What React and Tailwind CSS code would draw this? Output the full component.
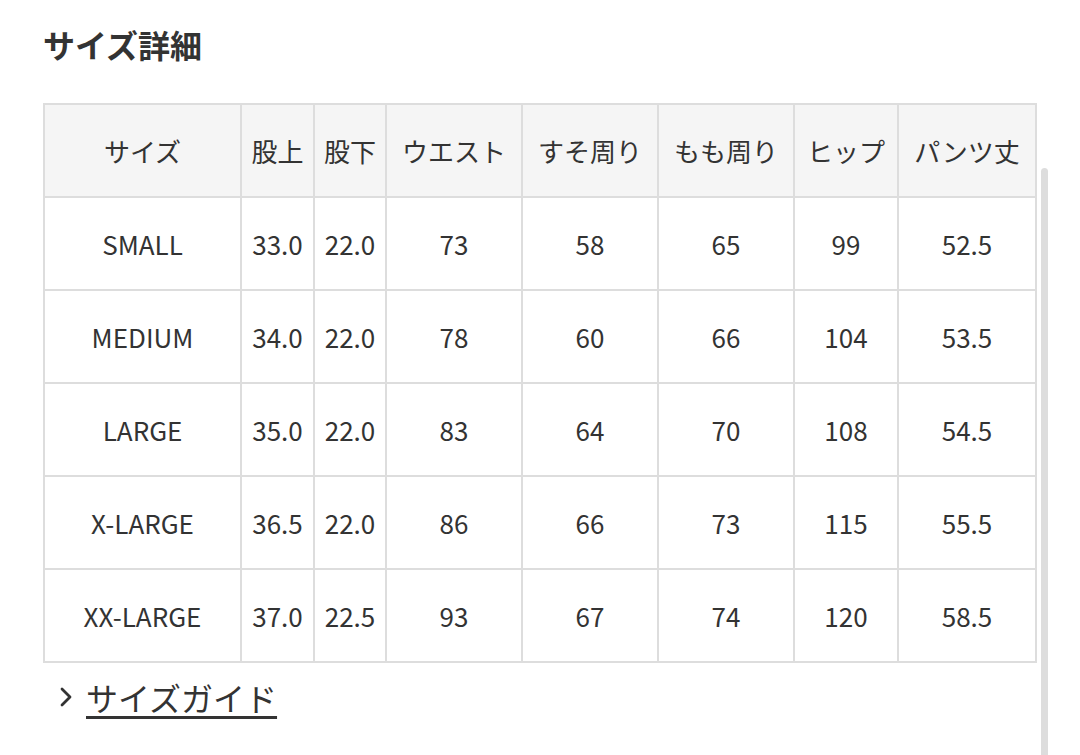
import React from 'react';

const COLS = [197, 73, 72, 136, 136, 136, 104, 138];
const HEAD = ['サイズ', '股上', '股下', 'ウエスト', 'すそ周り', 'もも周り', 'ヒップ', 'パンツ丈'];
const ROWS = [
  ['SMALL', '33.0', '22.0', '73', '58', '65', '99', '52.5'],
  ['MEDIUM', '34.0', '22.0', '78', '60', '66', '104', '53.5'],
  ['LARGE', '35.0', '22.0', '83', '64', '70', '108', '54.5'],
  ['X-LARGE', '36.5', '22.0', '86', '66', '73', '115', '55.5'],
  ['XX-LARGE', '37.0', '22.5', '93', '67', '74', '120', '58.5'],
];

export default function App() {
  return (
    <div
      className="relative w-[1080px] h-[755px] overflow-hidden bg-white text-[#333]"
      style={{ fontFamily: '"Noto Sans CJK JP", "Noto Sans", sans-serif' }}
    >
      <div className="pl-[43px] pt-[21px]">
        {/* Title */}
        <h2 className="text-[32px] leading-[46px] font-bold">サイズ詳細</h2>

        {/* Size table */}
        <table className="mt-[36px] table-fixed border-collapse w-[992px] text-[26px]">
          <colgroup>
            {COLS.map((w, i) => (
              <col key={i} style={{ width: w }} />
            ))}
          </colgroup>
          <thead>
            <tr className="h-[93px] bg-[#f5f5f5]">
              {HEAD.map((h, i) => (
                <th key={i} className="border-2 border-[#dddddd] font-normal text-center whitespace-nowrap p-0">
                  {h}
                </th>
              ))}
            </tr>
          </thead>
          <tbody>
            {ROWS.map((row, r) => (
              <tr key={r} className="h-[93px]">
                {row.map((c, i) => (
                  <td key={i} className="border-2 border-[#dddddd] text-center whitespace-nowrap p-0">
                    {c}
                  </td>
                ))}
              </tr>
            ))}
          </tbody>
        </table>

        {/* Size guide link */}
        <div className="mt-[14px] ml-[14px] flex items-center gap-[11px]">
          <svg width="18" height="28" viewBox="0 0 18 28" fill="none">
            <path d="M5 6 L13 14 L5 22" stroke="#333" strokeWidth="2.8" strokeLinecap="round" strokeLinejoin="round" />
          </svg>
          <a className="text-[32px] leading-[40px] underline decoration-[3px] underline-offset-[5px]">サイズガイド</a>
        </div>
      </div>

      {/* Overlay scrollbar thumb */}
      <div className="absolute left-[1041px] top-[168px] w-[7px] h-[620px] rounded-t-full bg-[#dddddd]" />
    </div>
  );
}
